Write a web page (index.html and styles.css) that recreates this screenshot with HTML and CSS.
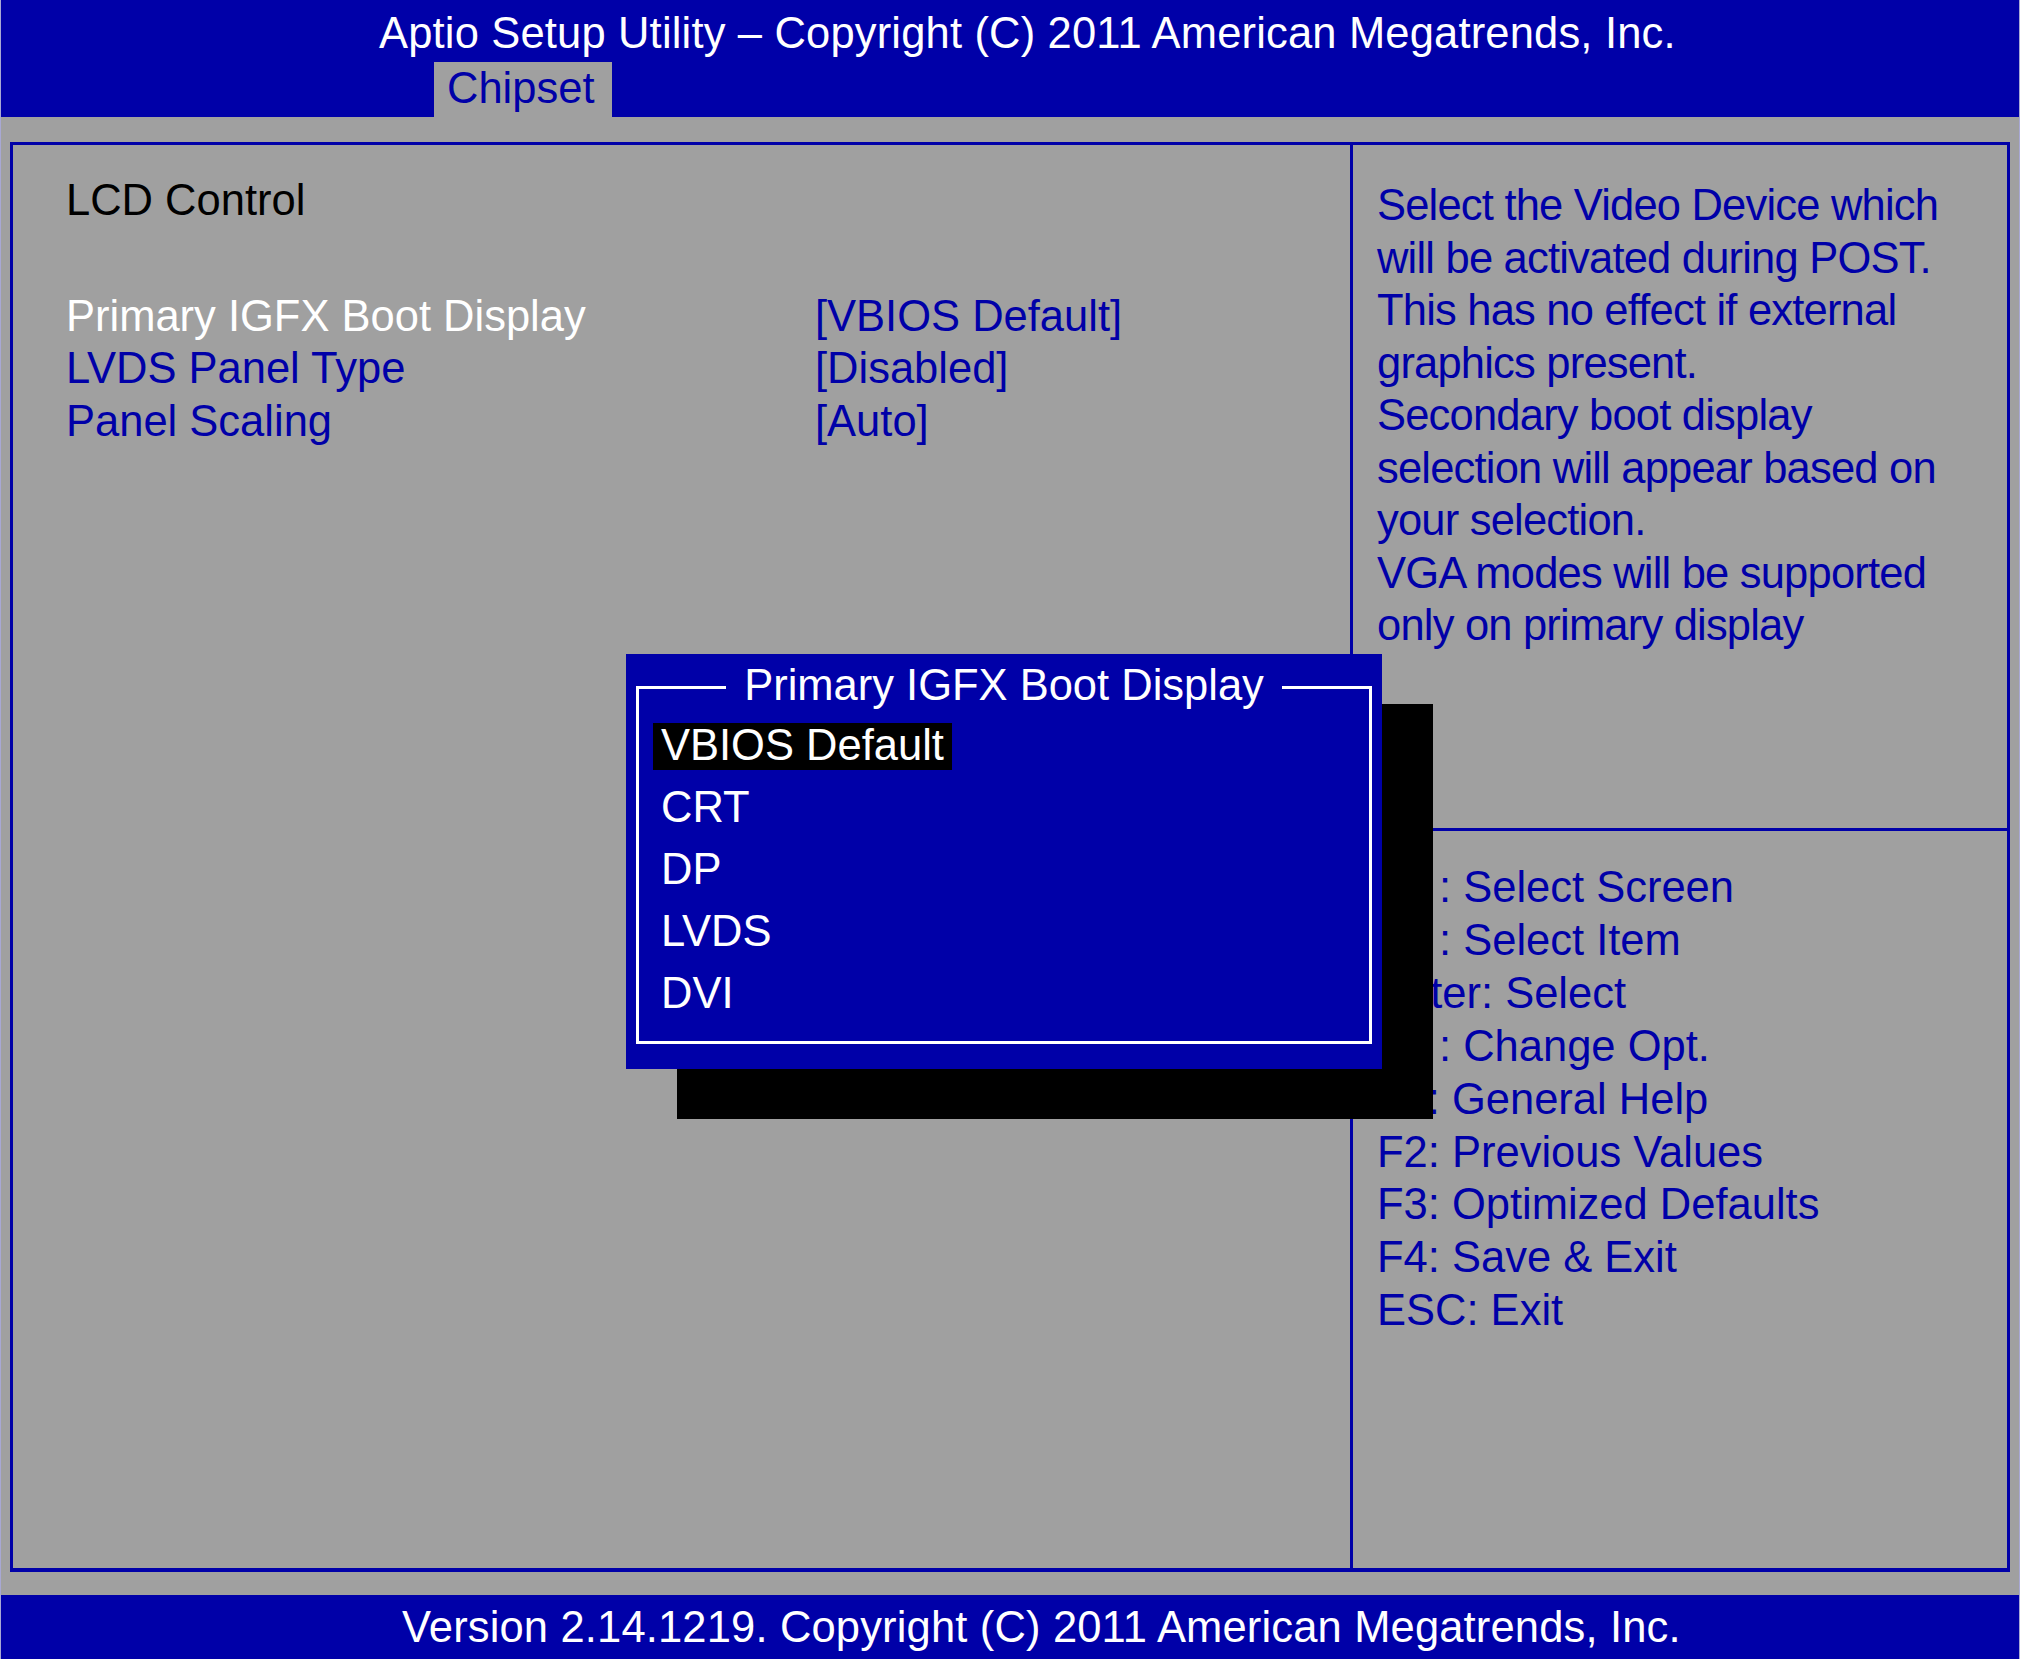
FILE: index.html
```html
<!DOCTYPE html>
<html lang="en">
<head>
<meta charset="utf-8">
<title>Aptio Setup Utility - Chipset</title>
<link rel="stylesheet" href="styles.css">
</head>
<body>
<div class="screen">
  <header class="top">
    <div class="title">Aptio Setup Utility – Copyright (C) 2011 American Megatrends, Inc.</div>
    <nav class="tabs"><span class="tab">Chipset</span></nav>
  </header>

  <main class="frame">
    <section class="left">
      <div class="heading">LCD Control</div>
      <div class="rows">
        <div class="label selected">Primary IGFX Boot Display</div>
        <div class="value">[VBIOS Default]</div>
        <div class="label">LVDS Panel Type</div>
        <div class="value">[Disabled]</div>
        <div class="label">Panel Scaling</div>
        <div class="value">[Auto]</div>
      </div>
    </section>
    <aside class="right">
      <div class="help">
        Select the Video Device which<br>
        will be activated during POST.<br>
        This has no effect if external<br>
        graphics present.<br>
        Secondary boot display<br>
        selection will appear based on<br>
        your selection.<br>
        VGA modes will be supported<br>
        only on primary display
      </div>
      <div class="keys">
        <div><span class="k">→←</span>: Select Screen</div>
        <div><span class="k">↑↓</span>: Select Item</div>
        <div>Enter: Select</div>
        <div><span class="k">+/-</span>: Change Opt.</div>
        <div>F1: General Help</div>
        <div>F2: Previous Values</div>
        <div>F3: Optimized Defaults</div>
        <div>F4: Save &amp; Exit</div>
        <div>ESC: Exit</div>
      </div>
    </aside>
  </main>

  <footer class="bottom">Version 2.14.1219. Copyright (C) 2011 American Megatrends, Inc.</footer>

  <div class="popup">
    <fieldset class="box">
      <legend class="box-title">Primary IGFX Boot Display</legend>
      <div class="opt"><span class="hl">VBIOS Default</span></div>
      <div class="opt"><span>CRT</span></div>
      <div class="opt"><span>DP</span></div>
      <div class="opt"><span>LVDS</span></div>
      <div class="opt"><span>DVI</span></div>
    </fieldset>
  </div>
</div>
</body>
</html>
```
FILE: styles.css
```css
html, body {
  margin: 0;
  padding: 0;
  background: #a0a0a0;
}

.screen {
  position: relative;
  box-sizing: border-box;
  width: 2020px;
  height: 1659px;
  background: #a0a0a0;
  border-left: 1px solid #a8a8d4;
  border-right: 1px solid #a8a8d4;
  font-family: "Liberation Sans", Arial, sans-serif;
  font-size: 43.5px;
  color: #0000a8;
  overflow: hidden;
  display: flex;
  flex-direction: column;
}

/* header */
.top {
  background: #0000a8;
  height: 117px;
  box-sizing: border-box;
  padding-top: 5px;
  display: flex;
  flex-direction: column;
}

.title {
  color: #ffffff;
  line-height: 57px;
  padding-left: 378px;
  letter-spacing: 0.17px;
  white-space: nowrap;
}

.tabs {
  display: flex;
  flex: 1;
}

.tab {
  margin-left: 433px;
  background: #a0a0a0;
  color: #0000a8;
  padding: 0 17px 3px 13px;
  line-height: 52px;
}

/* main frame */
.frame {
  margin: 25px 9px 0;
  height: 1430px;
  box-sizing: border-box;
  border: 3px solid #0000a8;
  border-bottom-width: 4px;
  display: grid;
  grid-template-columns: 1337px 1fr;
}

.left {
  padding: 29px 0 0 53px;
  line-height: 52.5px;
}

.heading {
  color: #000000;
}

.rows {
  margin-top: 63px;
  line-height: 52.7px;
  display: grid;
  grid-template-columns: 749px auto;
}

.label.selected {
  color: #ffffff;
}

.right {
  border-left: 3px solid #0000a8;
  display: flex;
  flex-direction: column;
}

.help {
  height: 686px;
  box-sizing: border-box;
  border-bottom: 3px solid #0000a8;
  padding: 34px 0 0 24px;
  line-height: 52.5px;
  letter-spacing: -0.8px;
  white-space: nowrap;
}

.keys {
  padding: 30px 0 0 24px;
  line-height: 52.9px;
  white-space: nowrap;
}

.k {
  display: inline-block;
  width: 62px;
  overflow: hidden;
  vertical-align: bottom;
  font-size: 30px;
  letter-spacing: -4px;
}

/* footer */
.bottom {
  margin-top: 23px;
  height: 64px;
  background: #0000a8;
  color: #ffffff;
  line-height: 64px;
  padding-left: 401px;
  letter-spacing: 0.16px;
  white-space: nowrap;
}

/* popup */
.popup {
  position: absolute;
  left: 625px;
  top: 654px;
  width: 756px;
  height: 415px;
  box-sizing: border-box;
  padding: 6px 10px 0;
  background: #0000a8;
  box-shadow: 51px 50px 0 0 #000000;
  color: #ffffff;
}

.box {
  margin: 0;
  border: 3px solid #ffffff;
  padding: 0 14px 16px;
  min-width: 0;
}

.box-title {
  margin: 0 auto;
  padding: 0 18px 5px;
  line-height: 50px;
  color: #ffffff;
}

.opt {
  height: 62px;
  display: flex;
  align-items: center;
}

.opt span {
  line-height: 44px;
  padding: 0 8px 3px;
}

.opt .hl {
  background: #000000;
}
```
